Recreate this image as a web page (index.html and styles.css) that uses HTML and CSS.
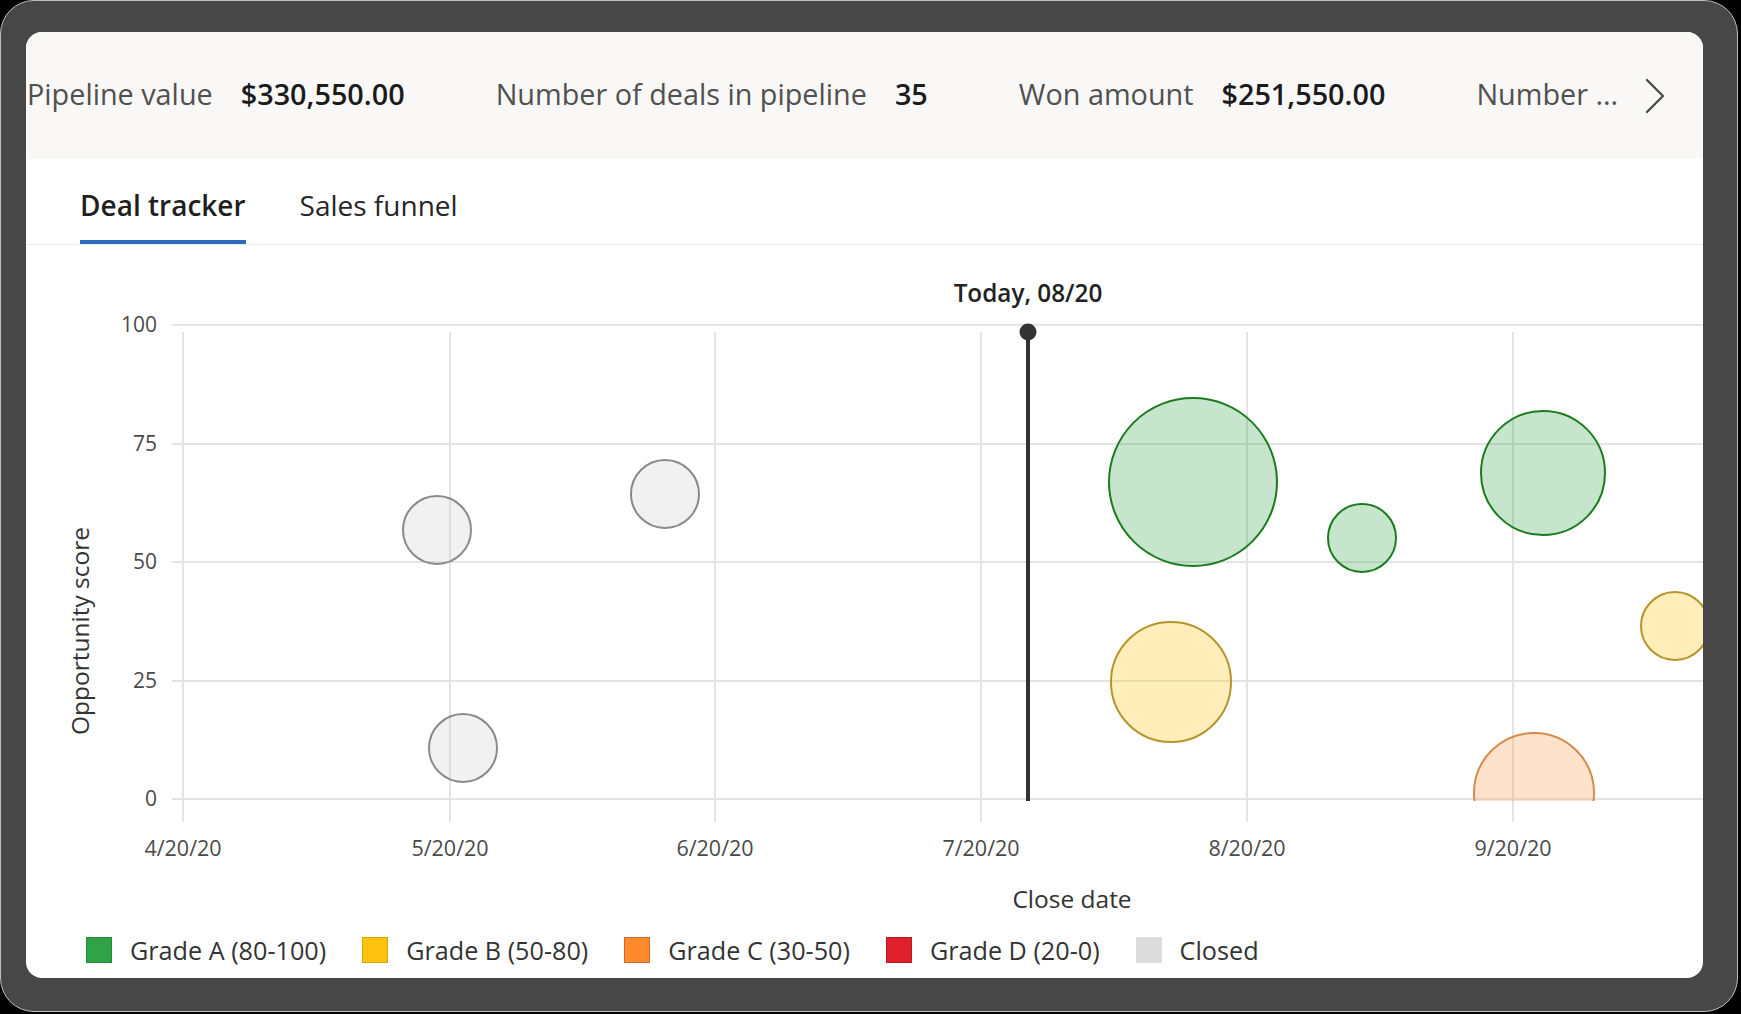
FILE: index.html
```html
<!DOCTYPE html>
<html lang="en">
<head>
<meta charset="utf-8">
<title>Deal tracker</title>
<link rel="stylesheet" href="styles.css">
</head>
<body>
<div class="frame">
  <div class="card">
    <div class="kpis">
      <div class="kpi-list">
        <div class="kpi"><span class="kpi-label">Pipeline value</span><span class="kpi-value">$330,550.00</span></div>
        <div class="kpi"><span class="kpi-label">Number of deals in pipeline</span><span class="kpi-value">35</span></div>
        <div class="kpi"><span class="kpi-label">Won amount</span><span class="kpi-value">$251,550.00</span></div>
        <div class="kpi"><span class="kpi-label">Number ...</span></div>
      </div>
      <div class="kpi-next">
        <svg width="22" height="36" viewBox="0 0 22 36"><path d="M3 2 L19 18 L3 34" fill="none" stroke="#454545" stroke-width="2.2" stroke-linecap="round" stroke-linejoin="round"/></svg>
      </div>
    </div>
    <div class="tabs">
      <div class="tab active">Deal tracker</div>
      <div class="tab">Sales funnel</div>
    </div>
    <svg class="chart" width="1677" height="692" viewBox="26 245 1677 692">
      <defs>
        <clipPath id="plot"><rect x="26" y="300" width="1677" height="501"/></clipPath>
      </defs>
      <g class="grid">
        <line x1="172" y1="325" x2="1703" y2="325"/>
        <line x1="172" y1="444" x2="1703" y2="444"/>
        <line x1="172" y1="562" x2="1703" y2="562"/>
        <line x1="172" y1="681" x2="1703" y2="681"/>
        <line x1="172" y1="799" x2="1703" y2="799"/>
        <line x1="183" y1="332" x2="183" y2="822"/>
        <line x1="450" y1="332" x2="450" y2="822"/>
        <line x1="715" y1="332" x2="715" y2="822"/>
        <line x1="981" y1="332" x2="981" y2="822"/>
        <line x1="1247" y1="332" x2="1247" y2="822"/>
        <line x1="1513" y1="332" x2="1513" y2="822"/>
      </g>
      <g class="ylabels">
        <text x="157" y="325" dy="0.35em">100</text>
        <text x="157" y="444" dy="0.35em">75</text>
        <text x="157" y="562" dy="0.35em">50</text>
        <text x="157" y="681" dy="0.35em">25</text>
        <text x="157" y="799" dy="0.35em">0</text>
      </g>
      <g class="xlabels">
        <text x="183" y="848" dy="0.35em">4/20/20</text>
        <text x="450" y="848" dy="0.35em">5/20/20</text>
        <text x="715" y="848" dy="0.35em">6/20/20</text>
        <text x="981" y="848" dy="0.35em">7/20/20</text>
        <text x="1247" y="848" dy="0.35em">8/20/20</text>
        <text x="1513" y="848" dy="0.35em">9/20/20</text>
      </g>
      <text class="axis-title" x="1072" y="899" dy="0.35em">Close date</text>
      <text class="axis-title" x="80" y="631" dy="0.35em" transform="rotate(-90 80 631)">Opportunity score</text>
      <g clip-path="url(#plot)">
        <circle class="b-closed" cx="437" cy="530" r="34"/>
        <circle class="b-closed" cx="665" cy="494" r="34"/>
        <circle class="b-closed" cx="463" cy="748" r="34"/>
        <circle class="b-a" cx="1193" cy="482" r="84"/>
        <circle class="b-a" cx="1362" cy="538" r="34"/>
        <circle class="b-a" cx="1543" cy="473" r="62"/>
        <circle class="b-b" cx="1171" cy="682" r="60"/>
        <circle class="b-b" cx="1675" cy="626" r="34"/>
        <circle class="b-c" cx="1534" cy="793" r="60"/>
      </g>
      <line class="today-line" x1="1028" y1="332" x2="1028" y2="801"/>
      <circle class="today-dot" cx="1028" cy="332" r="8.5"/>
      <text class="today-label" x="1028" y="293" dy="0.35em">Today, 08/20</text>
    </svg>
    <div class="legend">
      <div class="legend-item"><span class="swatch sw-a"></span>Grade A (80-100)</div>
      <div class="legend-item"><span class="swatch sw-b"></span>Grade B (50-80)</div>
      <div class="legend-item"><span class="swatch sw-c"></span>Grade C (30-50)</div>
      <div class="legend-item"><span class="swatch sw-d"></span>Grade D (20-0)</div>
      <div class="legend-item"><span class="swatch sw-closed"></span>Closed</div>
    </div>
  </div>
</div>
</body>
</html>
```

FILE: styles.css
```css
html, body {
  margin: 0;
  padding: 0;
  background: #000;
}
body {
  width: 1741px;
  height: 1014px;
  overflow: hidden;
  font-family: "Open Sans", "Noto Sans", sans-serif;
}
.frame {
  box-sizing: border-box;
  width: 1738px;
  height: 1012px;
  background: #474747;
  border: 1px solid #bdbdbd;
  border-radius: 34px;
  padding: 31px 34px 33px 25px;
  display: flex;
}
.card {
  flex: 1;
  background: #fff;
  border-radius: 16px;
  overflow: hidden;
  display: flex;
  flex-direction: column;
}
.kpis {
  box-sizing: border-box;
  height: 127px;
  flex: none;
  background: #f9f8f7;
  display: flex;
  align-items: center;
  padding: 0 37px 3px 1px;
  white-space: nowrap;
}
.kpi-list {
  flex: 1;
  min-width: 0;
  display: flex;
  align-items: center;
  gap: 91px;
  overflow: hidden;
}
.kpi {
  display: flex;
  align-items: center;
  gap: 28px;
  font-size: 28.8px;
  line-height: 38px;
}
.kpi-label {
  color: #505050;
}
.kpi-value {
  color: #1b1b1b;
  font-weight: 600;
}
.kpi-next {
  flex: none;
  width: 22px;
  height: 36px;
  display: flex;
  margin-top: 3px;
}
.tabs {
  flex: none;
  display: flex;
  gap: 54px;
  padding: 0 54px;
  border-bottom: 1px solid #ebebeb;
}
.tab {
  font-size: 28px;
  line-height: 38px;
  padding: 27px 0 16px;
  color: #262626;
  border-bottom: 4px solid transparent;
}
.tab.active {
  font-weight: 600;
  color: #1f1f1f;
  border-bottom-color: #2e6abb;
}
.chart {
  display: block;
  flex: none;
  font-family: "Open Sans", "Noto Sans", sans-serif;
}
.grid line {
  stroke: #e4e4e4;
  stroke-width: 2;
}
.ylabels text {
  font-size: 21px;
  fill: #4a4a4a;
  text-anchor: end;
}
.xlabels text {
  font-size: 21.5px;
  fill: #4a4a4a;
  text-anchor: middle;
}
.axis-title {
  font-size: 24.5px;
  fill: #333;
  text-anchor: middle;
}
.b-closed {
  fill: rgba(200, 200, 200, 0.25);
  stroke: #8a8a8a;
  stroke-width: 2;
}
.b-a {
  fill: rgba(46, 160, 67, 0.27);
  stroke: #1c7a1f;
  stroke-width: 2;
}
.b-b {
  fill: rgba(255, 192, 0, 0.27);
  stroke: #b5952b;
  stroke-width: 2;
}
.b-c {
  fill: rgba(255, 140, 46, 0.25);
  stroke: #d68a4c;
  stroke-width: 2;
}
.today-line {
  stroke: #333;
  stroke-width: 4;
}
.today-dot {
  fill: #333;
}
.today-label {
  font-size: 24.3px;
  font-weight: 600;
  fill: #222;
  text-anchor: middle;
}
.legend {
  flex: none;
  display: flex;
  gap: 36px;
  padding: 0 60px;
  height: 26px;
  align-items: center;
}
.legend-item {
  display: flex;
  align-items: center;
  gap: 18px;
  font-size: 25.2px;
  line-height: 26px;
  color: #333;
  white-space: nowrap;
}
.swatch {
  box-sizing: border-box;
  width: 26px;
  height: 26px;
  display: block;
  border: 1.5px solid transparent;
}
.sw-a { background: #2fa24a; border-color: #268a3d; }
.sw-b { background: #ffc20e; border-color: #d9a300; }
.sw-c { background: #ff8a2b; border-color: #c96a2a; }
.sw-d { background: #df1f2a; border-color: #b81a22; }
.sw-closed { background: #dcdcdc; border-color: #dcdcdc; }
```
